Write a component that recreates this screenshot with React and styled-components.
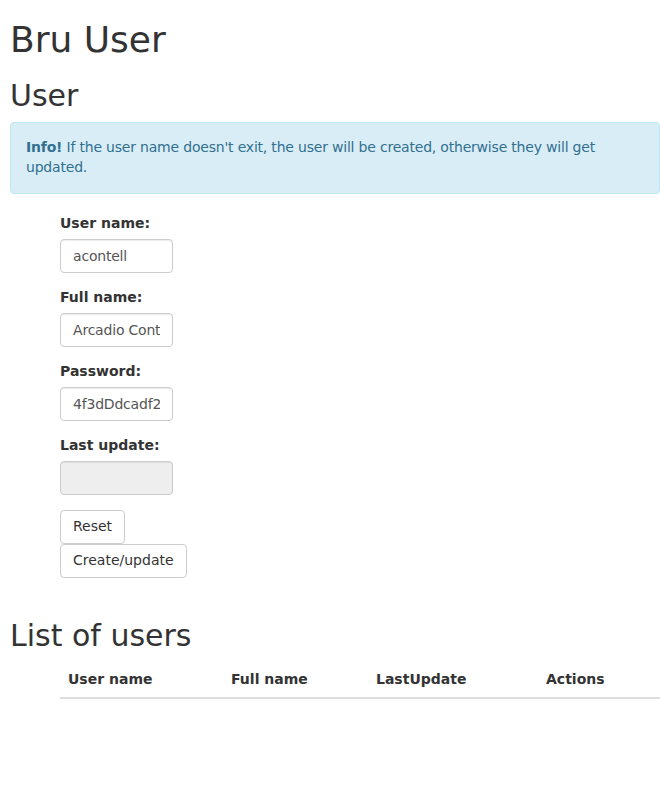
import styled, { createGlobalStyle } from "styled-components";

const GlobalStyle = createGlobalStyle`
    * {
        box-sizing: border-box;
    }
    body {
        margin: 0;
        background: #fff;
        color: #333;
        font-family: "DejaVu Sans", Verdana, sans-serif;
        font-size: 14px;
        line-height: 1.428571;
    }
`;

const Page = styled.div`
    padding: 0 0 40px 10px;
`;

const Title = styled.h1`
    font-size: 36px;
    font-weight: 500;
    line-height: 1.1;
    margin: 20px 0 10px;
`;

const SectionTitle = styled.h2`
    font-size: 30px;
    font-weight: 500;
    line-height: 1.1;
    margin: ${(p) => (p.$spaced ? "40.5px" : "19.5px")} 0 10px;
`;

const Alert = styled.div`
    padding: 15px;
    margin-bottom: 20px;
    border: 1px solid #bce8f1;
    border-radius: 4px;
    background-color: #d9edf7;
    color: #31708f;
    letter-spacing: -0.2px;

    strong {
        font-weight: bold;
    }
`;

const Form = styled.form`
    margin-left: 50px;
`;

const Group = styled.div`
    margin-bottom: 15px;
`;

const Label = styled.label`
    display: inline-block;
    margin-bottom: 5px;
    font-weight: bold;
`;

const Input = styled.input`
    display: block;
    width: 113px;
    height: 34px;
    padding: 6px 12px;
    border: 1px solid #ccc;
    border-radius: 4px;
    box-shadow: inset 0 1px 1px rgba(0, 0, 0, 0.075);
    background-color: ${(p) => (p.readOnly ? "#eee" : "#fff")};
    color: #555;
    font-family: inherit;
    font-size: 14px;
    line-height: 1.428571;
    letter-spacing: -0.2px;
    outline: none;
`;

const Button = styled.button`
    display: block;
    height: 34px;
    padding: 6px 12px;
    border: 1px solid #ccc;
    border-radius: 4px;
    background: #fff;
    color: #333;
    font-family: inherit;
    font-size: 14px;
    line-height: 1.428571;
    cursor: pointer;
`;

const Table = styled.table`
    margin-left: 50px;
    width: 600px;
    border-collapse: collapse;
    border-spacing: 0;
`;

const Th = styled.th`
    width: ${(p) => p.$w}px;
    padding: 8px;
    text-align: left;
    font-weight: bold;
    line-height: 1.428571;
    border-bottom: 2px solid #ddd;
`;

const fields = [
    { label: "User name:", value: "acontell" },
    { label: "Full name:", value: "Arcadio Contell" },
    { label: "Password:", value: "4f3dDdcadf2a" },
    { label: "Last update:", value: "", readOnly: true },
];

const columns = [
    { name: "User name", w: 163 },
    { name: "Full name", w: 145 },
    { name: "LastUpdate", w: 170 },
    { name: "Actions", w: 122 },
];

export default function App() {
    return (
        <Page>
            <GlobalStyle />
            <Title>Bru User</Title>
            <SectionTitle>User</SectionTitle>
            <Alert>
                <strong>Info!</strong> If the user name doesn't exit, the user will be created, otherwise they will get updated.
            </Alert>
            <Form onSubmit={(e) => e.preventDefault()}>
                {fields.map((f) => (
                    <Group key={f.label}>
                        <Label>{f.label}</Label>
                        <Input defaultValue={f.value} readOnly={f.readOnly} />
                    </Group>
                ))}
                <Button type="button">Reset</Button>
                <Button type="submit">Create/update</Button>
            </Form>
            <SectionTitle $spaced>List of users</SectionTitle>
            <Table>
                <thead>
                    <tr>
                        {columns.map((c) => (
                            <Th key={c.name} $w={c.w}>
                                {c.name}
                            </Th>
                        ))}
                    </tr>
                </thead>
                <tbody></tbody>
            </Table>
        </Page>
    );
}
